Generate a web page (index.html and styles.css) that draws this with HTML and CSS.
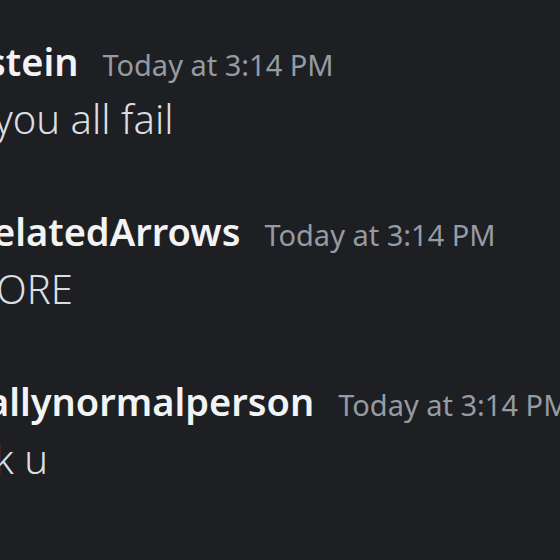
FILE: index.html
```html
<!DOCTYPE html>
<html lang="en">
<head>
    <meta charset="UTF-8">
    <title>Chat</title>
    <link rel="stylesheet" href="styles.css">
</head>
<body>
    <div class="chat">
        <div class="message">
            <div class="header">
                <span class="name name-1">stein</span>
                <span class="time">Today at 3:14 PM</span>
            </div>
            <div class="content content-1">you all fail</div>
        </div>
        <div class="message">
            <div class="header">
                <span class="name name-2">elatedArrows</span>
                <span class="time">Today at 3:14 PM</span>
            </div>
            <div class="content content-2">ORE</div>
        </div>
        <div class="message">
            <div class="header">
                <span class="name name-3">allynormalperson</span>
                <span class="time">Today at 3:14 PM</span>
            </div>
            <div class="content content-3">k u</div>
        </div>
    </div>
</body>
</html>
```

FILE: styles.css
```css
/* General Styles */
body {
    margin: 0;
    background-color: #1e1f22;
    font-family: "Noto Sans", "Open Sans", sans-serif;
    overflow: hidden;
}

/* Chat list */
.chat {
    display: flex;
    flex-direction: column;
    gap: 62px;
    padding-top: 36px;
    width: 600px;
}

.message {
    display: flex;
    flex-direction: column;
    gap: 4px;
}

/* Header: name + timestamp */
.header {
    display: flex;
    align-items: baseline;
    gap: 24px;
    line-height: 50px;
    white-space: nowrap;
}

.name {
    color: #f2f3f5;
    font-size: 38px;
    font-weight: 600;
}

.time {
    color: #949ba4;
    font-size: 29px;
}

/* Message body */
.content {
    color: #dbdee1;
    font-size: 40px;
    font-weight: 300;
    line-height: 50px;
    white-space: nowrap;
}

/* The left edge of the view cuts through the first letters */
.name-1 { margin-left: -13px; }
.name-2 { margin-left: -7px; }
.name-3 { margin-left: -13px; }
.content-1 { margin-left: -6px; }
.content-2 { margin-left: -4px; }
.content-3 { margin-left: -6px; }
```
